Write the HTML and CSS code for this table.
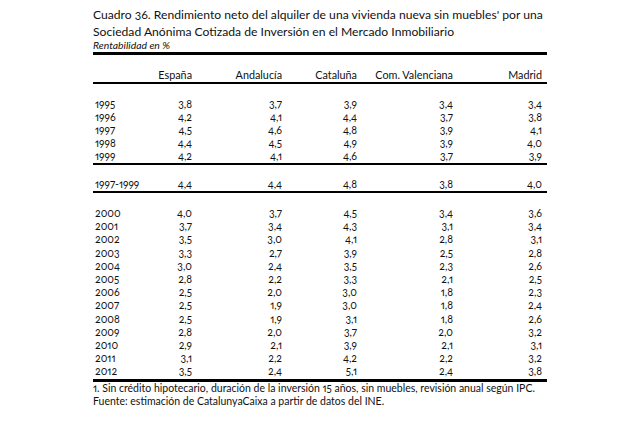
FILE: index.html
```html
<!DOCTYPE html>
<html lang="es">
<head>
<meta charset="utf-8">
<title>Cuadro 36</title>
<link rel="stylesheet" href="styles.css">
</head>
<body>
<div class="page">
  <h1 class="title">Cuadro 36. Rendimiento neto del alquiler de una vivienda nueva sin muebles' por una<br>Sociedad Anónima Cotizada de Inversión en el Mercado Inmobiliario</h1>
  <p class="subtitle">Rentabilidad en %</p>
  <div class="table">
    <div class="row head"><span class="yr"></span><span>España</span><span>Andalucía</span><span>Cataluña</span><span>Com. Valenciana</span><span>Madrid</span></div>
    <div class="group first">
      <div class="row"><span class="yr">1995</span><span>3,8</span><span>3,7</span><span>3,9</span><span>3,4</span><span>3,4</span></div>
      <div class="row"><span class="yr">1996</span><span>4,2</span><span>4,1</span><span>4,4</span><span>3,7</span><span>3,8</span></div>
      <div class="row"><span class="yr">1997</span><span>4,5</span><span>4,6</span><span>4,8</span><span>3,9</span><span>4,1</span></div>
      <div class="row"><span class="yr">1998</span><span>4,4</span><span>4,5</span><span>4,9</span><span>3,9</span><span>4,0</span></div>
      <div class="row"><span class="yr">1999</span><span>4,2</span><span>4,1</span><span>4,6</span><span>3,7</span><span>3,9</span></div>
    </div>
    <div class="group mid">
      <div class="row"><span class="yr">1997-1999</span><span>4,4</span><span>4,4</span><span>4,8</span><span>3,8</span><span>4,0</span></div>
    </div>
    <div class="group last">
      <div class="row"><span class="yr">2000</span><span>4,0</span><span>3,7</span><span>4,5</span><span>3,4</span><span>3,6</span></div>
      <div class="row"><span class="yr">2001</span><span>3,7</span><span>3,4</span><span>4,3</span><span>3,1</span><span>3,4</span></div>
      <div class="row"><span class="yr">2002</span><span>3,5</span><span>3,0</span><span>4,1</span><span>2,8</span><span>3,1</span></div>
      <div class="row"><span class="yr">2003</span><span>3,3</span><span>2,7</span><span>3,9</span><span>2,5</span><span>2,8</span></div>
      <div class="row"><span class="yr">2004</span><span>3,0</span><span>2,4</span><span>3,5</span><span>2,3</span><span>2,6</span></div>
      <div class="row"><span class="yr">2005</span><span>2,8</span><span>2,2</span><span>3,3</span><span>2,1</span><span>2,5</span></div>
      <div class="row"><span class="yr">2006</span><span>2,5</span><span>2,0</span><span>3,0</span><span>1,8</span><span>2,3</span></div>
      <div class="row"><span class="yr">2007</span><span>2,5</span><span>1,9</span><span>3,0</span><span>1,8</span><span>2,4</span></div>
      <div class="row"><span class="yr">2008</span><span>2,5</span><span>1,9</span><span>3,1</span><span>1,8</span><span>2,6</span></div>
      <div class="row"><span class="yr">2009</span><span>2,8</span><span>2,0</span><span>3,7</span><span>2,0</span><span>3,2</span></div>
      <div class="row"><span class="yr">2010</span><span>2,9</span><span>2,1</span><span>3,9</span><span>2,1</span><span>3,1</span></div>
      <div class="row"><span class="yr">2011</span><span>3,1</span><span>2,2</span><span>4,2</span><span>2,2</span><span>3,2</span></div>
      <div class="row"><span class="yr">2012</span><span>3,5</span><span>2,4</span><span>5,1</span><span>2,4</span><span>3,8</span></div>
    </div>
  </div>
  <div class="notes">
    <p>1. Sin crédito hipotecario, duración de la inversión 15 años, sin muebles, revisión anual según IPC.</p>
    <p>Fuente: estimación de CatalunyaCaixa a partir de datos del INE.</p>
  </div>
</div>
</body>
</html>
```
FILE: styles.css
```css
html, body {
  margin: 0;
  padding: 0;
  background: #ffffff;
}

body {
  font-family: Lato, "Open Sans", "Liberation Sans", sans-serif;
  color: #111111;
  font-variant-numeric: oldstyle-nums proportional-nums;
}

.page {
  width: 454px;
  margin-left: 93px;
  padding-top: 7px;
}

.title {
  margin: 0;
  font-size: 12.15px;
  font-weight: normal;
  line-height: 16.5px;
  white-space: nowrap;
}

.subtitle {
  margin: 0;
  font-size: 10.4px;
  font-style: italic;
  line-height: 11px;
  padding-bottom: 1px;
}

.table {
  border-top: 3px solid #000;
  border-bottom: 3px solid #000;
}

.row {
  display: grid;
  grid-template-columns: 50px 49px 90px 75px 96px 89px;
  font-size: 10.5px;
  line-height: 13px;
  text-align: right;
}

.row .yr {
  text-align: left;
  padding-left: 2px;
  white-space: nowrap;
}

.head {
  padding-top: 13px;
  padding-bottom: 1px;
  border-bottom: 2px solid #000;
  font-size: 10.8px;
}

.group.first {
  padding-top: 14px;
  border-bottom: 2px solid #000;
}

.group.mid {
  padding-top: 13px;
  border-bottom: 2px solid #000;
}

.group.last {
  padding-top: 14px;
}

.group.last .row {
  line-height: 13.2px;
}

.notes p {
  margin: 0;
  font-size: 10.5px;
  line-height: 13.5px;
  white-space: nowrap;
}
```
